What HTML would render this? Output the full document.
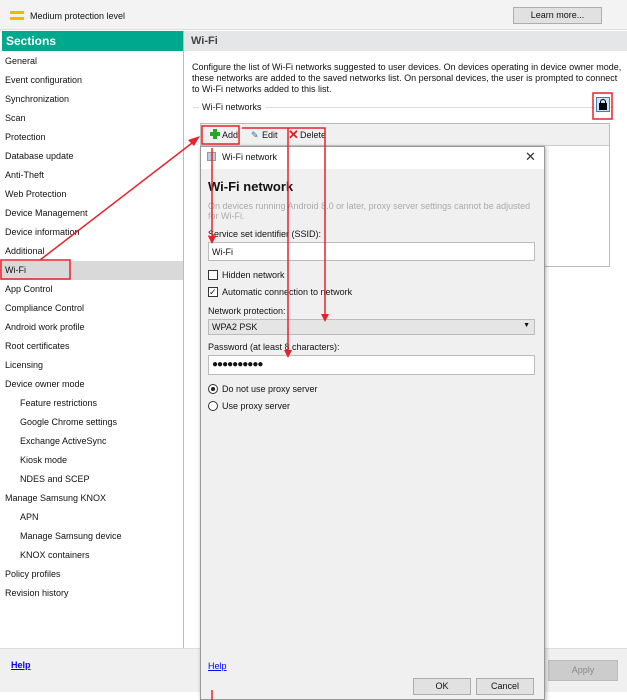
<!DOCTYPE html>
<html><head><style>
*{margin:0;padding:0;box-sizing:border-box}
body{width:627px;height:700px;overflow:hidden;position:relative;font-family:"Liberation Sans",sans-serif;font-size:9px;color:#111;background:#fff}
.a{position:absolute}
.it{position:absolute;left:5px;white-space:nowrap}
.sub{left:20px}
</style></head><body>
<div class="a" style="left:0;top:0;width:627px;height:30px;background:#f3f3f3;border-bottom:1px solid #ddd"></div>
<div class="a" style="left:10px;top:11px;width:14px;height:3px;background:#f5b800"></div>
<div class="a" style="left:10px;top:17px;width:14px;height:3px;background:#f5b800"></div>
<div class="a" style="left:30px;top:11px">Medium protection level</div>
<div class="a" style="left:513px;top:7px;width:89px;height:17px;background:#e1e1e1;border:1px solid #adadad;text-align:center;line-height:15px">Learn more...</div>

<div class="a" style="left:2px;top:31px;width:181px;height:20px;background:#00a88e;color:#fff;font-weight:bold;font-size:12px;padding:3px 4px">Sections</div>
<div class="a" style="left:183px;top:31px;width:1px;height:617px;background:#bbb"></div>
<div class="a" style="left:184px;top:31px;width:443px;height:20px;background:#e4e6e8;font-weight:bold;font-size:11px;color:#444;padding:4px 7px">Wi-Fi</div>
<div class="a" style="left:0;top:261px;width:183px;height:19px;background:#d9d9d9"></div>
<div class="it" style="top:56px">General</div>
<div class="it" style="top:75px">Event configuration</div>
<div class="it" style="top:94px">Synchronization</div>
<div class="it" style="top:113px">Scan</div>
<div class="it" style="top:132px">Protection</div>
<div class="it" style="top:151px">Database update</div>
<div class="it" style="top:170px">Anti-Theft</div>
<div class="it" style="top:189px">Web Protection</div>
<div class="it" style="top:208px">Device Management</div>
<div class="it" style="top:227px">Device information</div>
<div class="it" style="top:246px">Additional</div>
<div class="it" style="top:265px">Wi-Fi</div>
<div class="it" style="top:284px">App Control</div>
<div class="it" style="top:303px">Compliance Control</div>
<div class="it" style="top:322px">Android work profile</div>
<div class="it" style="top:341px">Root certificates</div>
<div class="it" style="top:360px">Licensing</div>
<div class="it" style="top:379px">Device owner mode</div>
<div class="it sub" style="top:398px">Feature restrictions</div>
<div class="it sub" style="top:417px">Google Chrome settings</div>
<div class="it sub" style="top:436px">Exchange ActiveSync</div>
<div class="it sub" style="top:455px">Kiosk mode</div>
<div class="it sub" style="top:474px">NDES and SCEP</div>
<div class="it" style="top:493px">Manage Samsung KNOX</div>
<div class="it sub" style="top:512px">APN</div>
<div class="it sub" style="top:531px">Manage Samsung device</div>
<div class="it sub" style="top:550px">KNOX containers</div>
<div class="it" style="top:569px">Policy profiles</div>
<div class="it" style="top:588px">Revision history</div>

<div class="a" style="left:192px;top:62px;width:430px;line-height:11px">Configure the list of Wi-Fi networks suggested to user devices. On devices operating in device owner mode, these networks are added to the saved networks list. On personal devices, the user is prompted to connect to Wi-Fi networks added to this list.</div>
<div class="a" style="left:193px;top:107px;width:420px;height:1px;background:#ddd"></div>
<div class="a" style="left:199px;top:102px;background:#fff;padding:0 3px">Wi-Fi networks</div>
<div class="a" style="left:596px;top:97px;width:14px;height:15px;background:#cfe3f5;border:1px solid #4a7ab0"></div>
<div class="a" style="left:599px;top:103px;width:8px;height:7px;background:#000"></div>
<div class="a" style="left:600px;top:99px;width:6px;height:6px;border:1.5px solid #000;border-bottom:none;border-radius:3px 3px 0 0"></div>
<div class="a" style="left:200px;top:123px;width:410px;height:144px;border:1px solid #bbb;background:#fff"></div>
<div class="a" style="left:201px;top:124px;width:408px;height:22px;background:#f0f0f0;border-bottom:1px solid #ccc"></div>
<div class="a" style="left:222px;top:130px">Add</div>
<div class="a" style="left:210px;top:129px;width:10px;height:10px;background:linear-gradient(#2a2,#2a2) center/10px 4px no-repeat,linear-gradient(#2a2,#2a2) center/4px 10px no-repeat"></div>
<div class="a" style="left:251px;top:130px;color:#36a">✎</div><div class="a" style="left:262px;top:130px">Edit</div>
<div class="a" style="left:288px;top:127px;color:#d22;font-size:13px;font-weight:bold">✕</div><div class="a" style="left:300px;top:130px">Delete</div>

<div class="a" style="left:0;top:648px;width:627px;height:44px;background:#f0f0f0;border-top:1px solid #ddd"></div>
<div class="a" style="left:11px;top:660px;color:#00f;text-decoration:underline;font-weight:bold">Help</div>
<div class="a" style="left:548px;top:660px;width:70px;height:21px;background:#ccc;border:1px solid #bbb;color:#888;text-align:center;line-height:19px">Apply</div>

<div class="a" style="left:200px;top:146px;width:345px;height:554px;background:#f0f0f0;border:1px solid #999;box-shadow:1px 1px 4px rgba(0,0,0,.3)"></div>
<div class="a" style="left:201px;top:147px;width:343px;height:22px;background:#fff"></div>
<div class="a" style="left:207px;top:152px;width:9px;height:9px;border:1px solid #999;background:#bcd"></div>
<div class="a" style="left:222px;top:152px">Wi-Fi network</div>
<div class="a" style="left:525px;top:149px;font-size:13px;color:#333">✕</div>
<div class="a" style="left:208px;top:179px;font-size:13px;font-weight:bold">Wi-Fi network</div>
<div class="a" style="left:208px;top:201px;width:330px;color:#aaa;line-height:10px">On devices running Android 8.0 or later, proxy server settings cannot be adjusted for Wi-Fi.</div>
<div class="a" style="left:208px;top:229px">Service set identifier (SSID):</div>
<div class="a" style="left:208px;top:242px;width:327px;height:19px;background:#fff;border:1px solid #bbb;padding:4px 3px">Wi-Fi</div>
<div class="a" style="left:208px;top:270px;width:10px;height:10px;border:1px solid #333;background:#fff"></div>
<div class="a" style="left:222px;top:270px">Hidden network</div>
<div class="a" style="left:208px;top:287px;width:10px;height:10px;border:1px solid #333;background:#fff;font-size:9px;line-height:8px">✓</div>
<div class="a" style="left:222px;top:287px">Automatic connection to network</div>
<div class="a" style="left:208px;top:306px">Network protection:</div>
<div class="a" style="left:208px;top:319px;width:327px;height:16px;background:#e5e5e5;border:1px solid #bbb;padding:2px 3px">WPA2 PSK<span style="position:absolute;right:4px;top:2px;font-size:7px">▼</span></div>
<div class="a" style="left:208px;top:342px">Password (at least 8 characters):</div>
<div class="a" style="left:208px;top:355px;width:327px;height:20px;background:#fff;border:1px solid #bbb;padding:3px 3px;font-size:10px;letter-spacing:-1px">●●●●●●●●●●</div>
<div class="a" style="left:208px;top:384px;width:10px;height:10px;border:1px solid #333;border-radius:50%;background:#fff"></div>
<div class="a" style="left:211px;top:387px;width:4px;height:4px;border-radius:50%;background:#222"></div>
<div class="a" style="left:222px;top:384px">Do not use proxy server</div>
<div class="a" style="left:208px;top:401px;width:10px;height:10px;border:1px solid #333;border-radius:50%;background:#fff"></div>
<div class="a" style="left:222px;top:401px">Use proxy server</div>
<div class="a" style="left:208px;top:661px;color:#00f;text-decoration:underline">Help</div>
<div class="a" style="left:413px;top:678px;width:58px;height:17px;background:#e1e1e1;border:1px solid #adadad;text-align:center;line-height:15px">OK</div>
<div class="a" style="left:476px;top:678px;width:58px;height:17px;background:#e1e1e1;border:1px solid #adadad;text-align:center;line-height:15px">Cancel</div>

<svg class="a" style="left:0;top:0" width="627" height="700">
<g stroke="#e8222a" stroke-width="1.5" fill="none">
<rect x="1" y="260" width="69" height="19"/>
<rect x="593" y="93" width="19" height="26"/>
<rect x="202" y="126" width="37" height="18"/>
<polyline points="242,128 325,128 325,318"/>
<line x1="288" y1="128" x2="288" y2="354"/>
<line x1="212" y1="148" x2="212" y2="240"/>
<line x1="212" y1="690" x2="212" y2="700"/>
<line x1="40" y1="260" x2="196" y2="140"/>
</g>
<g fill="#e8222a">
<polygon points="200,136 188,140 194,146"/>
<polygon points="208,236 216,236 212,244"/>
<polygon points="321,314 329,314 325,322"/>
<polygon points="284,350 292,350 288,358"/>
</g>
</svg>
</body></html>
